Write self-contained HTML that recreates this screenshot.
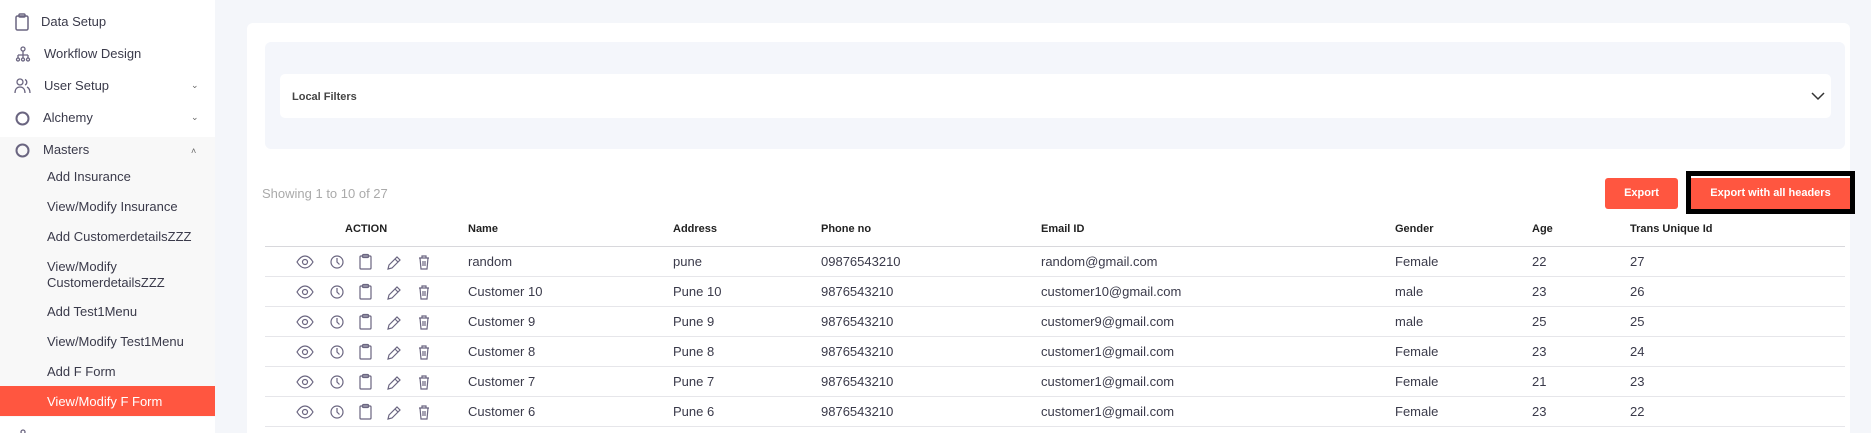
<!DOCTYPE html>
<html style="width:1871px;height:433px;overflow:hidden"><head><meta charset="utf-8"><style>
*{margin:0;padding:0;box-sizing:border-box}
body{width:1871px;height:433px;overflow:hidden;background:#f4f6fa;font-family:"Liberation Sans",sans-serif;color:#3a3a4a;position:relative}
.sb{position:absolute;left:0;top:0;width:215px;height:433px;background:#fff}
.ms{position:absolute;left:0;top:137px;width:215px;height:280px;background:#f8f8f8}
.t{position:absolute;font-size:13px;white-space:nowrap;line-height:16px}
.ic{position:absolute}
.act{position:absolute;left:0;top:386px;width:215px;height:30px;background:#ff5640}
.chev{position:absolute;left:191px;font-size:9px;color:#666}
.card{position:absolute;left:247px;top:23px;width:1603px;height:410px;background:#fff;border-radius:6px 6px 0 0}
.fb{position:absolute;left:265px;top:42px;width:1580px;height:107px;background:#f4f6fb;border-radius:6px}
.lf{position:absolute;left:280px;top:74px;width:1551px;height:44px;background:#fff;border-radius:5px}
.btn{position:absolute;background:#ff5640;color:#fff;font-weight:bold;font-size:11px;text-align:center;line-height:31px;border-radius:3px}
.h{position:absolute;top:223px;font-size:11px;font-weight:bold;color:#222;white-space:nowrap}
.line{position:absolute;left:265px;width:1580px;height:1px;background:#e6e6ea}
.c{position:absolute;font-size:13px;color:#3a3a4a;white-space:nowrap}
</style></head><body>
<div class="sb"></div><div class="ms"></div><div class="act"></div>
<svg class="ic" style="left:15px;top:13px" width="14" height="18" viewBox="0 0 14 18" fill="none" stroke="#6a6580" stroke-width="1.5"><rect x="1" y="3" width="12" height="14" rx="1.5"/><rect x="4" y="1" width="6" height="3" rx="1"/></svg>
<div class="t" style="left:41px;top:14px">Data Setup</div>
<svg class="ic" style="left:15px;top:46px" width="16" height="16" viewBox="0 0 16 16" fill="none" stroke="#6a6580" stroke-width="1.3"><circle cx="8" cy="3" r="2"/><path d="M8 5v4M3 9h10M3 9v3M8 9v3M13 9v3"/><circle cx="3" cy="13.5" r="1.5"/><circle cx="8" cy="13.5" r="1.5"/><circle cx="13" cy="13.5" r="1.5"/></svg>
<div class="t" style="left:44px;top:46px">Workflow Design</div>
<svg class="ic" style="left:14px;top:78px" width="18" height="16" viewBox="0 0 18 16" fill="none" stroke="#6a6580" stroke-width="1.3"><circle cx="6" cy="4" r="3"/><path d="M1 15c0-4 2-6 5-6s5 2 5 6M11 1.5a3 3 0 010 5.5M13 9c2 1 3 3 3 6"/></svg>
<div class="t" style="left:44px;top:78px">User Setup</div><div class="chev" style="top:80px">⌄</div>
<svg class="ic" style="left:15px;top:111px" width="15" height="15"><circle cx="7.5" cy="7.5" r="6" fill="none" stroke="#6a6580" stroke-width="2"/></svg>
<div class="t" style="left:43px;top:110px">Alchemy</div><div class="chev" style="top:112px">⌄</div>
<svg class="ic" style="left:15px;top:143px" width="15" height="15"><circle cx="7.5" cy="7.5" r="6" fill="none" stroke="#6a6580" stroke-width="2"/></svg>
<div class="t" style="left:43px;top:142px">Masters</div><div class="chev" style="top:146px">˄</div>
<div class="t" style="left:47px;top:169px">Add Insurance</div>
<div class="t" style="left:47px;top:199px">View/Modify Insurance</div>
<div class="t" style="left:47px;top:229px">Add CustomerdetailsZZZ</div>
<div class="t" style="left:47px;top:259px">View/Modify<br>CustomerdetailsZZZ</div>
<div class="t" style="left:47px;top:304px">Add Test1Menu</div>
<div class="t" style="left:47px;top:334px">View/Modify Test1Menu</div>
<div class="t" style="left:47px;top:364px">Add F Form</div>
<div class="t" style="left:47px;top:394px;color:#fff">View/Modify F Form</div>
<div style="position:absolute;left:0;top:428px;width:215px;height:5px;overflow:hidden">
<div class="t" style="left:44px;top:2px">Menu Setup</div>
<svg class="ic" style="left:15px;top:1px" width="16" height="16" viewBox="0 0 16 16" fill="none" stroke="#6a6580" stroke-width="1.3"><circle cx="8" cy="3" r="2"/><path d="M8 5v4"/></svg>
</div>

<div class="card"></div><div class="fb"></div><div class="lf"></div>
<div style="position:absolute;left:292px;top:91px;font-size:11px;font-weight:bold;color:#444">Local Filters</div>
<svg class="ic" style="left:1811px;top:92px" width="14" height="9"><path d="M1 1l6 6 6-6" fill="none" stroke="#333" stroke-width="1.5"/></svg>
<div style="position:absolute;left:262px;top:186px;font-size:13px;color:#aaa">Showing 1 to 10 of 27</div>
<div class="btn" style="left:1605px;top:178px;width:73px">Export</div>
<div style="position:absolute;left:1686px;top:171px;width:169px;height:43px;border:5px solid #000;background:#fff"></div>
<div class="btn" style="left:1691px;top:178px;width:159px;border-radius:0">Export with all headers</div>
<div class="h" style="left:345px">ACTION</div>
<div class="h" style="left:468px">Name</div>
<div class="h" style="left:673px">Address</div>
<div class="h" style="left:821px">Phone no</div>
<div class="h" style="left:1041px">Email ID</div>
<div class="h" style="left:1395px">Gender</div>
<div class="h" style="left:1532px">Age</div>
<div class="h" style="left:1630px">Trans Unique Id</div>
<div class="line" style="top:246px;background:#d8d8dc"></div>
<div id="rows"></div>
<script>
var d=[["random","pune","09876543210","random@gmail.com","Female","22","27"],["Customer 10","Pune 10","9876543210","customer10@gmail.com","male","23","26"],["Customer 9","Pune 9","9876543210","customer9@gmail.com","male","25","25"],["Customer 8","Pune 8","9876543210","customer1@gmail.com","Female","23","24"],["Customer 7","Pune 7","9876543210","customer1@gmail.com","Female","21","23"],["Customer 6","Pune 6","9876543210","customer1@gmail.com","Female","23","22"]];
var xs=[468,673,821,1041,1395,1532,1630],h="";
var ic='<svg width="140" height="18" viewBox="0 0 140 18" fill="none" stroke="#6a6580" stroke-width="1.2"><path d="M1 9c3-5 6-6 8-6s5 1 8 6c-3 5-6 6-8 6s-5-1-8-6z"/><circle cx="9" cy="9" r="2.5"/><circle cx="41" cy="9" r="6"/><path d="M41 5v4l2.5 2.5"/><rect x="64" y="3" width="11" height="13" rx="1"/><rect x="66.5" y="1.5" width="6" height="3" rx="1"/><path d="M92 16l1-4 8-8 3 3-8 8z M99 6l3 3"/><path d="M123 5h10M126 5V3h4v2M124 5l1 11h6l1-11M127 8v5M129 8v5"/></svg>';
d.forEach(function(r,i){var y=253+i*30;h+='<div style="position:absolute;left:296px;top:'+y+'px">'+ic+'</div>';r.forEach(function(v,j){h+='<div class="c" style="left:'+xs[j]+'px;top:'+(y+1)+'px">'+v+'</div>'});h+='<div class="line" style="top:'+(y+23)+'px"></div>'});
document.getElementById("rows").innerHTML=h;
</script>
</body></html>
